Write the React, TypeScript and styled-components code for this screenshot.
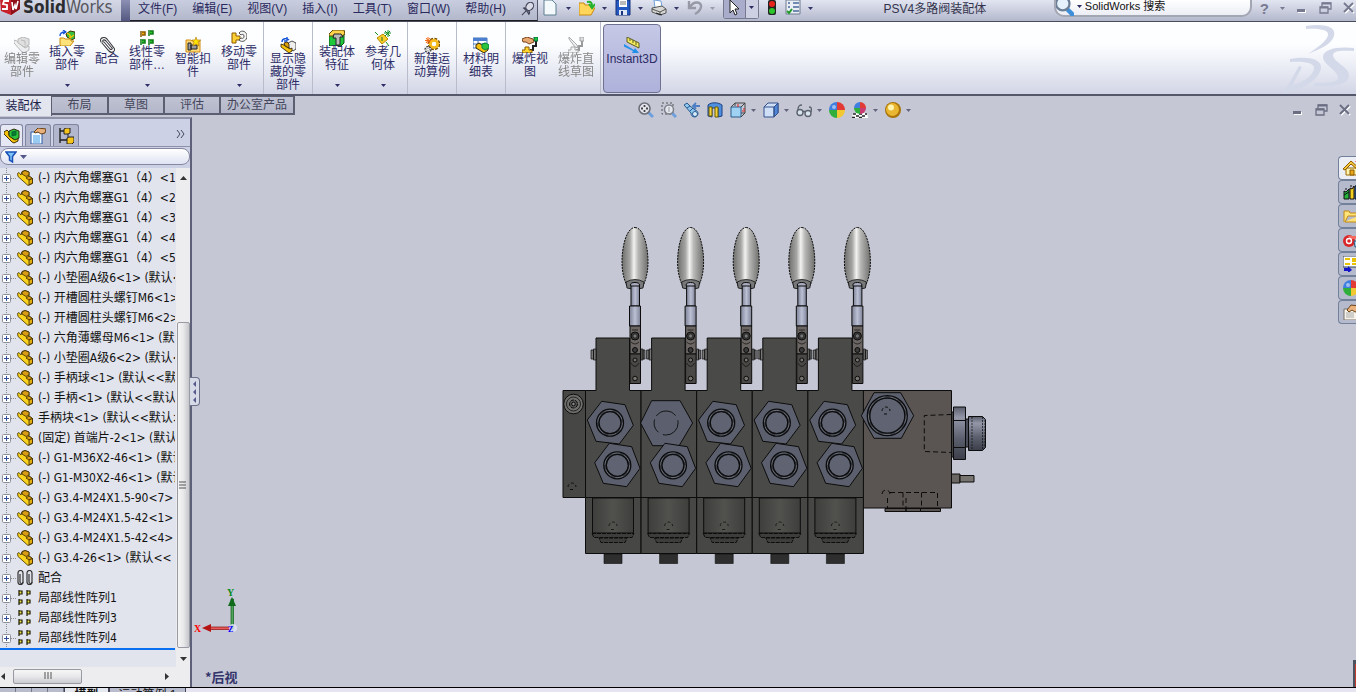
import React from 'react';
import styled, { createGlobalStyle } from 'styled-components';

const GlobalStyle = createGlobalStyle`
  * { box-sizing: border-box; }
  body { margin: 0; overflow: hidden; }
  button, input { font: inherit; color: inherit; margin: 0; }
  button { background: none; border: 0; padding: 0; }
  ul { list-style: none; margin: 0; padding: 0; }
  svg { display: block; flex: none; }
`;

const AppShell = styled.div`
  height: 100vh;
  display: flex;
  flex-direction: column;
  overflow: hidden;
  background: #c5c8d4;
  color: #2a2a5e;
  font: 12px/13px 'Liberation Sans', 'Noto Sans CJK SC', sans-serif;
`;

/* ---------- menu bar ---------- */
const MenuBar = styled.header`
  flex: none;
  display: flex;
  height: 22px;
  background: linear-gradient(#e2e5f1, #b3b8cc);
  border-bottom: 1px solid #4a4c5c;
`;
const Brand = styled.div`
  display: flex;
  align-items: center;
  gap: 3px;
  width: 121px;
  padding-bottom: 6px;
  background: linear-gradient(#d5d8e6, #b9bdcf);
  font-family: 'DejaVu Sans Condensed', 'Liberation Sans', sans-serif;
  font-size: 17px;
  line-height: 13px;
  color: #55565e;
  white-space: nowrap;
  b { color: #2c2c30; }
`;
const BrandEdge = styled.div`
  width: 9px;
  background: linear-gradient(#8d90b4, #54577f);
`;
const Menus = styled.nav`
  display: flex;
  align-items: center;
  gap: 15px;
  padding: 0 2px 2px 8px;
  background: linear-gradient(#c9cde0, #b4b8cb);
  border-right: 1px solid #55586a;
  border-bottom: 1px solid #1c1c22;
  white-space: nowrap;
`;
const QuickBar = styled.div`
  display: flex;
  align-items: center;
  gap: 5px;
  padding: 0 0 5px 5px;
`;
const QuickItem = styled.div<{ $off?: boolean }>`
  display: flex;
  align-items: center;
  gap: 7px;
  width: 31px;
  color: ${p => (p.$off ? '#9a9cac' : '#34366a')};
  button { display: flex; align-items: center; }
`;
const SelectTool = styled.div`
  display: flex;
  align-self: flex-start;
  height: 19px;
  border: 1px solid #77798f;
  border-top: 0;
  border-radius: 0 0 3px 3px;
  button { display: flex; align-items: center; justify-content: center; width: 21px; padding-bottom: 3px; background: #a9acca; }
  button + button { width: 13px; background: #cdd0e2; border-left: 1px solid #77798f; }
`;
const DocTitle = styled.div`
  margin: 0 auto;
  padding-top: 3px;
  color: #33334d;
  white-space: nowrap;
`;
const Search = styled.form`
  display: flex;
  align-items: center;
  align-self: flex-start;
  gap: 3px;
  width: 198px;
  height: 17px;
  padding-bottom: 2px;
  background: linear-gradient(#ffffff, #eceef5);
  border: 2px solid #a3a6b3;
  border-top: 0;
  border-radius: 0 0 10px 10px;
  font-size: 11px;
  input { width: 150px; border: 0; padding: 0; outline: 0; background: none; color: #111; }
  input::placeholder { color: #111; opacity: 1; }
`;
const TopControls = styled.div`
  display: flex;
  align-items: center;
  gap: 11px;
  padding: 0 1px 5px 8px;
  color: #777a90;
  button { display: flex; }
  b { font-size: 15px; }
`;

/* ---------- ribbon ---------- */
const Ribbon = styled.section`
  flex: none;
  display: flex;
  height: 74px;
  background: linear-gradient(#fdfeff 30%, #eceef6 60%, #d2d5e5);
  border-bottom: 2px solid #55576a;
`;
const RibbonGroup = styled.div`
  display: flex;
  padding: 0 1px;
  border-right: 1px solid #b9bccb;
  &:first-child { padding: 0 1px 0 0; }
`;
const RibbonButton = styled.button<{ $w?: number; $menu?: boolean; $off?: boolean; $on?: boolean }>`
  display: flex;
  flex-direction: column;
  align-items: center;
  width: ${p => p.$w ?? 46}px;
  height: ${p => (p.$on ? 69 : 72)}px;
  margin: ${p => (p.$on ? '2px 0 0 2px' : 0)};
  padding: ${p => (p.$menu ? 8 : p.$on ? 12 : 15)}px 0 7px;
  color: ${p => (p.$off ? '#85868c' : '#2c2c66')};
  border: ${p => (p.$on ? '1px solid #6f7190' : '0')};
  border-radius: 4px;
  background: ${p => (p.$on ? 'linear-gradient(#c6c8e6, #aeb1da)' : 'none')};
  filter: ${p => (p.$off ? 'grayscale(1)' : 'none')};
  svg:first-child { opacity: ${p => (p.$off ? 0.45 : 1)}; }
  svg:last-child:not(:first-child) { margin-top: auto; }
`;
const RibbonLabel = styled.span<{ $wide?: boolean }>`
  width: ${p => (p.$wide ? 54 : 38)}px;
  line-height: 13px;
  word-break: break-all;
`;
const Watermark = styled.div`
  margin-left: auto;
`;

/* ---------- body ---------- */
const Main = styled.main`
  flex: 1;
  display: flex;
  min-height: 0;
`;
const Left = styled.aside`
  position: relative;
  z-index: 1;
  flex: none;
  display: flex;
  flex-direction: column;
  width: 192px;
`;
const Tabs = styled.nav`
  display: flex;
  width: max-content;
  height: 20px;
`;
const Tab = styled.button<{ $w: number; $active?: boolean }>`
  width: ${p => p.$w}px;
  height: ${p => (p.$active ? 20 : 19)}px;
  padding-top: 1px;
  padding-right: ${p => (p.$active ? 4 : 0)}px;
  color: ${p => (p.$active ? '#22224a' : '#44465c')};
  background: ${p => (p.$active ? '#e3e5ef' : 'linear-gradient(#bfc2d2, #b4b7c9)')};
  border: solid #5c5e72;
  border-width: ${p => (p.$active ? '0 1px 0 0' : '1px 2px 2px 0')};
`;
const Panel = styled.div`
  flex: 1;
  display: flex;
  flex-direction: column;
  min-height: 0;
  margin-top: 1px;
  background: #cdd1e6;
  border-top: 2px solid #8e91a8;
  border-right: 2px solid #5d6078;
`;
const PanelTabs = styled.div`
  flex: none;
  display: flex;
  align-items: flex-end;
  height: 28px;
  padding-top: 5px;
  gap: 2px;
  border-bottom: 1px solid #8e91a8;
`;
const PanelTab = styled.button<{ $active?: boolean }>`
  display: flex;
  align-items: center;
  justify-content: center;
  width: ${p => (p.$active ? 23 : 26)}px;
  height: 22px;
  border: 1px solid #8084a0;
  border-bottom: 0;
  border-radius: 3px 3px 0 0;
  background: ${p => (p.$active ? '#e6e8f4' : '#b3b7cd')};
`;
const Expand = styled.button`
  display: flex;
  align-self: flex-start;
  margin: 6px 5px 0 auto;
`;
const Filter = styled.div`
  flex: none;
  display: flex;
  align-items: center;
  gap: 3px;
  height: 17px;
  margin: 1px 0 3px;
  padding-left: 4px;
  border: 1px solid #8588a0;
  border-radius: 8px;
  background: linear-gradient(#ffffff, #dfe3f2);
  color: #55578a;
  button { display: flex; }
`;
const TreeArea = styled.div`
  flex: 1;
  display: flex;
  min-height: 0;
  background: #e1e4ec;
`;
const Tree = styled.ul`
  flex: 1;
  min-width: 0;
  margin-right: 1px;
  overflow: hidden;
  color: #111;
  font-family: 'DejaVu Sans Condensed', 'Noto Sans CJK SC', sans-serif;
`;
const TreeRow = styled.li`
  display: flex;
  align-items: center;
  height: 20px;
  padding-left: 2px;
  white-space: pre;
  background: repeating-linear-gradient(#8c8e98 0 1px, transparent 1px 2px) 6px 0 / 1px 100% no-repeat;
`;
const Dots = styled.span`
  flex: none;
  width: 5px;
  margin-right: 1px;
  border-top: 1px dotted #8c8e98;
`;
const Plus = styled.button`
  flex: none;
  display: flex;
`;
const NodeName = styled.span`
  margin-left: 5px;
  line-height: 20px;
`;
const RollbackBar = styled.li`
  height: 2px;
  background: #0a6ff0;
`;
const VScroll = styled.div`
  flex: none;
  display: flex;
  flex-direction: column;
  align-items: center;
  justify-content: space-between;
  width: 14px;
  padding: 7px 0 5px;
  background: #ededf0;
`;
const VThumb = styled.div`
  display: flex;
  align-items: center;
  justify-content: center;
  width: 13px;
  height: 326px;
  margin: auto 0 7px;
  border: 1px solid #979aa2;
  border-radius: 2px;
  background: linear-gradient(90deg, #f6f6f7, #e8e8ea 50%, #c6c7cc);
`;
const HScroll = styled.div`
  flex: none;
  display: flex;
  align-items: center;
  height: 20px;
  padding: 0 20px 2px 0;
  background: #ededf0;
`;
const HThumb = styled.div`
  display: flex;
  align-items: center;
  justify-content: center;
  width: 69px;
  height: 15px;
  margin: 0 auto 0 6px;
  border: 1px solid #979aa2;
  border-radius: 2px;
  background: linear-gradient(#f6f6f7, #e8e8ea 50%, #cbccd1);
`;
const Splitter = styled.button`
  position: absolute;
  left: 190px;
  top: 281px;
  width: 10px;
  height: 29px;
  display: flex;
  align-items: center;
  justify-content: center;
  background: #d6d9e6;
  border: 1px solid #6c6f88;
  border-left: 0;
  border-radius: 0 4px 4px 0;
`;

/* ---------- graphics area ---------- */
const Viewport = styled.section`
  position: relative;
  flex: 1;
  display: flex;
  flex-direction: column;
  min-width: 0;
  background: #c5c8d4;
`;
const ViewHead = styled.div`
  display: grid;
  grid-template-columns: 1fr auto 1fr;
  align-items: center;
  height: 28px;
`;
const ViewTools = styled.div`
  grid-column: 2;
  display: flex;
  align-items: center;
  gap: 7px;
  color: #62647e;
  button { display: flex; align-items: center; gap: 5px; }
`;
const WindowControls = styled.div`
  display: flex;
  justify-content: flex-end;
  gap: 11px;
  padding-right: 5px;
  color: #6b6d83;
  button { display: flex; }
`;
const Stage = styled.div`
  flex: 1;
  display: flex;
  justify-content: center;
  align-items: center;
  min-height: 0;
  padding-top: 12px;
  margin-bottom: -67px;
`;
const ViewFoot = styled.div`
  display: flex;
  flex-direction: column;
  align-items: flex-start;
  gap: 35px;
  width: 60px;
  padding: 0 0 4px 2px;
  font-family: 'Noto Sans CJK SC', sans-serif;
  font-size: 13px;
  font-weight: bold;
  color: #34346c;
  span { padding-left: 11px; }
`;
const TaskTabs = styled.nav`
  position: absolute;
  right: 0;
  top: 60px;
  display: flex;
  flex-direction: column;
`;
const TaskTab = styled.button<{ $active?: boolean }>`
  display: flex;
  align-items: center;
  width: 18px;
  height: 24px;
  padding-left: 4px;
  overflow: hidden;
  border: 1px solid #72809a;
  border-right: 0;
  border-radius: 4px 0 0 4px;
  background: ${p => (p.$active ? '#eceef6' : '#b6bacd')};
`;
const EdgeHandle = styled.div`
  position: absolute;
  right: 0;
  bottom: 0;
  width: 3px;
  height: 27px;
  background: #c43a2c;
  border: solid #4b5260;
  border-width: 4px 0 0 2px;
`;
const BottomBar = styled.footer`
  flex: none;
  display: flex;
  height: 5px;
  overflow: hidden;
  background: #e6e4f0;
  border-top: 1px solid #000;
  color: #111;
`;
const BottomNav = styled.button`
  width: 16px;
  background: #b9bccd;
  border-right: 1px solid #77798f;
`;
const BottomTab = styled.button<{ $w: number; $active?: boolean }>`
  width: ${p => p.$w}px;
  height: 14px;
  font-weight: ${p => (p.$active ? 'bold' : 'normal')};
  background: ${p => (p.$active ? '#e6e8f0' : '#b9bccd')};
  border-left: 1px solid #44465a;
  border-right: 1px solid #44465a;
  white-space: nowrap;
`;

/* ---------- icons ---------- */
const Caret = () => (
  <svg width="5" height="3" viewBox="0 0 5 3"><path d="M0 0h5L2.5 3z" fill="currentColor" /></svg>
);
const Arrow = ({ d }: { d: string }) => (
  <svg width="7" height="7" viewBox="0 0 7 7"><path d={d} fill="#333" /></svg>
);

const art: Record<string, React.ReactNode> = {
  part: (
    <g stroke="#3a2800" strokeWidth=".8" strokeLinejoin="round">
      <path d="M.5 3.500L2 2.500l2 2.500 1-3.500L8 .5l4 1.500v4l3.500 2.500v5L11 15.500 1 6.500z" fill="#f8d21c" />
      <path d="M5 2l3-1.500L12 2v3L9 6.500 5 4z" fill="#d79c14" />
      <path d="M9 8l3-2 3.500 2.500L12 10z" fill="#d79c14" />
      <path d="M12 10v5l3.500-2v-4.500z" fill="#e3ad14" />
    </g>
  ),
  asm: (
    <g stroke="#2a1c00" strokeWidth=".9" strokeLinejoin="round">
      <path d="M0 4l3-2 2 2v3l4 4 5-1v3l-4 2-2-1-8-8z" fill="#f5c20c" />
      <path d="M5 3l5-2 5 2v7l-4 2-6-4z" fill="#2ec43c" />
      <path d="M8 4l4-1v4l-4 1z" fill="#0b7d2b" stroke="#063" />
    </g>
  ),
  edit: (
    <g stroke="#666" strokeLinejoin="round">
      <path d="M0 3l3 1 8 7 4-2v4l-5 3-2-1-8-9z" fill="#ddd" />
      <path d="M4 2l5-2 6 2v6l-5 2-6-4z" fill="#bbb" /><path d="M7 3l4 1v4" fill="none" />
    </g>
  ),
  insert: (
    <g strokeLinejoin="round">
      <path d="M1 6C1 3 3 2 6 2M4 0l3 2-3 2" fill="none" stroke="#1554d8" strokeWidth="1.4" />
      <path d="M7 4l4-3 5 1v6l-3 2-5-3z" fill="#38c040" stroke="#3c3000" />
      <path d="M8 3l3 2v3l4-3" fill="none" stroke="#f2c000" strokeWidth="1.5" />
      <path d="M1 15V8h4l1 1h6v2h3l-4 5H2z" fill="#ffe27a" stroke="#c58a10" />
    </g>
  ),
  clip: (
    <g fill="none" stroke="#3b3b40" strokeWidth="1.1" strokeLinecap="round">
      <path d="M3 6l7 8c3 3 7 0 5-3L8 2C5-1 0 1 2 5M5 5l6 7c1 1 3 0 2-1L7 4C5 2 3 3 4 5" />
    </g>
  ),
  pattern: (
    <g strokeWidth="1">
      <path d="M2 1v6M3 2h3v3H3" fill="#f2b000" stroke="#8a5a00" strokeWidth="1.5" />
      {[[9, 0], [1, 9], [9, 9]].map(([x, y]) => (
        <path key={`${x}${y}`} transform={`translate(${x} ${y})`} d="M1 0v6M2 1h3v3H2" fill="#2bc22e" stroke="#0c7a16" strokeWidth="1.5" />
      ))}
    </g>
  ),
  smart: (
    <g>
      <path d="M1 3h5l1 1h8v11H1z" fill="#ffd978" stroke="#d08a10" />
      <path d="M3 6h3v7H3zM6 8h6v4H6z" fill="#9a9ca0" stroke="#222" />
      <path d="M11 0l1 3 4 0-3 2 1 4-3-2-3 2 1-4-2-2h3z" fill="#ffe300" stroke="#b07400" strokeWidth=".6" />
    </g>
  ),
  move: (
    <g>
      <path d="M1 3h4v3h4v4H5v3H1z" fill="#ffd034" stroke="#8a5a00" />
      <path d="M8 3c3-4 8-1 8 3 0 5-5 7-8 4l2-2c2 1 3 0 3-2s-2-2-3-1z" fill="#f4f4f4" stroke="#555" />
    </g>
  ),
  showhide: (
    <g strokeLinejoin="round" strokeWidth=".8">
      <path d="M2 5c0-4 5-4 7-2M7 0v4H4" fill="none" stroke="#1554d8" strokeWidth="1.4" />
      <path d="M8 6l4-2 4 2v6l-3 2-5-4z" fill="#eee" stroke="#222" />
      <path d="M1 7l3 1 6 4 2-1v3l-3 2-8-6z" fill="#f5c20c" stroke="#2a1c00" />
      <path d="M4 6l3-1 2 2v4L5 9z" fill="#d99d10" stroke="#2a1c00" />
    </g>
  ),
  feature: (
    <g>
      <path d="M0 4l4-3h11v12l-3 3H0z" fill="#1fc93a" stroke="#0a4d12" />
      <path d="M0 4l4-4h11l1 4-3 2H0z" fill="#ffd34a" stroke="#5a4200" />
      <path d="M5 4h7l2 3h-3v8H7V8H4z" fill="#bbb" stroke="#222" />
    </g>
  ),
  refgeo: (
    <g>
      <path d="M2 8l6-4 5 5-6 5z" fill="#f7cf2c" stroke="#b98a00" />
      <path d="M0 2l3 3M11 12l3 4M13 0v7M9 3h7M10 1l5 5M15 1l-5 5" stroke="#129322" fill="none" />
      <path d="M7 7v4" stroke="#1a6a20" />
    </g>
  ),
  motion: (
    <g fill="none">
      <circle cx="10" cy="7" r="4.5" stroke="#7a5200" strokeWidth="3.6" strokeDasharray="2.4 1.1" />
      <circle cx="10" cy="7" r="3.7" stroke="#f7bb1c" strokeWidth="2.8" />
      <circle cx="4" cy="12.500" r="2.400" stroke="#333" strokeWidth="2.400" strokeDasharray="1.4 .8" />
      <circle cx="4" cy="12.500" r="2" stroke="#ddd" strokeWidth="1" />
      <path d="M4 0v7M1 3.500h6M2 1l4 5M6 1L2 6" stroke="#f36a12" />
    </g>
  ),
  bom: (
    <g>
      <path d="M0 1h14v10H0z" fill="#fff" stroke="#4775b8" /><path d="M0 1h14v3H0z" fill="#4a7fd0" />
      <path d="M0 7h14M5 4v7" stroke="#4775b8" />
      <path d="M3 8l3-2 3 2 2-2 4 2v5l-4 3-8-5z" fill="#f5c20c" stroke="#3a2a00" /><path d="M9 7l4-1 3 2v3l-4 2-3-2z" fill="#2ec43c" stroke="#084" />
    </g>
  ),
  explode: (
    <g>
      <path d="M14 3v6h-3v4H8" fill="none" stroke="#222" strokeWidth="2" />
      <path d="M12 0h4v4h-4z" fill="#1fc43a" stroke="#064" />
      <path d="M0 2l5-2 6 2 1 3-5 2-3-2-3 0z" fill="#e7a871" stroke="#7a4418" />
      <path d="M3 10h4v3h3v3H0v-3h3z" fill="#ffd52e" stroke="#8a5a00" />
    </g>
  ),
  sketch: (
    <g>
      <path d="M14 3v6h-3v4H8" fill="none" stroke="#222" strokeWidth="2" /><path d="M12 0h4v4h-4z" fill="#bbb" stroke="#333" />
      <path d="M1 0l8 8 1 3-3-1-6-8z" fill="#ddd" stroke="#444" /><path d="M3 10h4v3h3v3H0v-3h3z" fill="#eee" stroke="#444" />
    </g>
  ),
  instant: (
    <g>
      <path d="M3 0l12 6v5L3 5z" fill="#f4ec5c" stroke="#5b5a20" /><path d="M6 2v2M9 3v3M12 5v3" stroke="#5b5a20" />
      <path d="M0 7l10 6 1-2 4 5-7 0 1-2-10-5z" fill="#1f8fe8" />
    </g>
  ),
  mates: (
    <g fill="none" stroke="#333" strokeWidth="1.2">
      <path d="M1 12V3a2.500 2.500 0 015 0v9a1.500 1.500 0 01-3 0V4" /><path d="M10 12V3a2.500 2.500 0 015 0v9a1.500 1.500 0 01-3 0V4" />
      <path d="M1 12a2 2 0 005 0M10 12a2 2 0 005 0" />
    </g>
  ),
  localpat: (
    <g fill="#f2e24a" stroke="#1c1c00" strokeWidth="1.2">
      {[[1, 0], [9, 0], [1, 9], [9, 9]].map(([x, y]) => (
        <path key={`${x}${y}`} transform={`translate(${x} ${y})`} d="M1 0v6M1 1h3v3H1" />
      ))}
    </g>
  ),
  props: (
    <g>
      <path d="M1 4h11v12H1z" fill="#f2f8ff" stroke="#2a5fa8" /><path d="M3 8h7M3 10h7M3 12h7M3 14h7" stroke="#3fa0e8" />
      <path d="M4 4l4-4 8 1-1 4-4 1-3-2-3 1z" fill="#e9b27c" stroke="#6a4218" />
    </g>
  ),
  config: (
    <g>
      <path d="M2 0v15M2 3h5M2 12h7" stroke="#222" fill="none" strokeWidth="1.4" />
      <path d="M6 1l2-1h4v5l-2 1H6zM9 10l2-1h5v5l-2 2H9z" fill="#f7c51a" stroke="#222" />
      <path d="M10 6v3" stroke="#222" />
    </g>
  ),
  new: <path d="M1 0h8l4 4v11H1z" fill="#f4f9fc" stroke="#5d7f90" />,
  open: (
    <g>
      <path d="M0 15V3h5l1 2h6v3h4l-4 7H1z" fill="#ffd65a" stroke="#c88a10" />
      <path d="M8 2c4-1 5 1 5 4M10 4l3 4 3-4" fill="none" stroke="#21b32a" strokeWidth="2" />
    </g>
  ),
  save: (
    <g>
      <path d="M1 0h14v15H1z" fill="#2459c0" stroke="#16337c" /><path d="M4 0h8v7H4z" fill="#fff" />
      <path d="M5 2h6M5 4h6" stroke="#777" /><path d="M4 10h8v5H4z" fill="#dde6f4" /><path d="M6 11h2v4H6z" fill="#16337c" />
    </g>
  ),
  print: (
    <g stroke="#555">
      <path d="M3 0l7 1 1 6-7 1z" fill="#fff" stroke="#6f9fd8" /><path d="M1 8l10-2 4 3v4l-6 2-8-3z" fill="#d6d6d4" />
      <path d="M1 9l8 3 6-3M9 12v3" fill="none" /><path d="M5 13l6 2" stroke="#222" />
    </g>
  ),
  undo: <path d="M2 1v7h7M3 7c4-7 12-5 11 0-1 4-4 6-6 7" fill="none" stroke="#9799a6" strokeWidth="2.4" />,
  cursor: <path d="M4 0l9 9H9l2 5-2 1-2-5-3 3z" fill="#fff" stroke="#222" />,
  traffic: (
    <g>
      <rect x="4" y="0" width="8" height="15" rx="2" fill="#222" /><circle cx="8" cy="4" r="3" fill="#e8231c" /><circle cx="8" cy="11" r="3" fill="#2cc52c" />
    </g>
  ),
  options: (
    <g>
      <path d="M1 0h14v14H1z" fill="#e9eef4" stroke="#6e7b90" />
      <path d="M3 3h2M3 7h2M8 3h6M8 7h6M8 11h6" stroke="#4e6b9a" strokeWidth="1.5" /><path d="M2 11l2 2 3-4" fill="none" stroke="#1f9a28" strokeWidth="2" />
    </g>
  ),
  pin: (
    <g stroke="#44465a" strokeWidth="1.3">
      <path d="M1 15l6-6" /><path d="M3 7c2-1 3 0 5 2s2 4 1 5c-1-3-4-5-6-7z" fill="#8d90a4" /><ellipse cx="10" cy="5" rx="4" ry="5" transform="rotate(35 10 5)" fill="#d9dbe6" />
    </g>
  ),
  lens: (
    <g>
      <path d="M10 10l6 6" stroke="#3c8fd8" strokeWidth="4" /><circle cx="6" cy="5" r="6" fill="#e6f2fb" stroke="#6c7f96" strokeWidth="2" />
    </g>
  ),
  zoomfit: (
    <g>
      <path d="M10 10l5 5" stroke="#6e9fdc" strokeWidth="3" /><circle cx="6.500" cy="6.500" r="5.500" fill="#e3e6ee" stroke="#6d7079" strokeWidth="1.6" />
      <path d="M6.500 3v7M3 6.500h7" stroke="#444" strokeWidth="1.8" strokeDasharray="2 3" />
    </g>
  ),
  zoomarea: (
    <g>
      <path d="M1 1h11v11H1z" fill="none" stroke="#555" strokeDasharray="2 2" /><path d="M11 11l4 4" stroke="#6e9fdc" strokeWidth="3" />
      <circle cx="8" cy="7.500" r="4.500" fill="#e3e6ee" stroke="#7d8089" strokeWidth="1.5" /><path d="M8 5v5" stroke="#999" />
    </g>
  ),
  prev: (
    <g>
      <path d="M0 3l3-2 3 3 5 4c4 1 4 6 0 7-3 0-4-2-4-4z" fill="#8fc6ee" stroke="#29598f" /><path d="M3 6l3-2M6 9l3-3" stroke="#29598f" /><circle cx="11" cy="12" r="2.500" fill="#d9eefb" stroke="#29598f" />
      <path d="M16 4h-6M12 1L9 4l3 3" fill="none" stroke="#4b7ec4" strokeWidth="1.8" />
    </g>
  ),
  section: (
    <g>
      <path d="M1 3c3-3 10-3 14 0v11l-4 1V6H5v9l-4-1z" fill="#4e8fe0" stroke="#1d3f80" />
      <path d="M2 5h3v9H2zM8 5h3v10H8z" fill="#f3d23a" stroke="#6b5a00" />
    </g>
  ),
  orient: (
    <g>
      <path d="M5 1h10v10M5 1v3M15 11h-4" fill="none" stroke="#444" /><path d="M1 5h10v10H1z" fill="#9fd2f2" stroke="#2b5d8c" />
      <path d="M1 5l4-4M11 5l4-4M11 15l4-4" stroke="#444" /><path d="M8 2v3M13 7h2M12 9h3" stroke="#d22" />
    </g>
  ),
  display: (
    <g stroke="#33508c">
      <path d="M1 5l4-4h10v10l-4 4H1z" fill="#cfe0f6" /><path d="M11 5l4-4v10l-4 4z" fill="#4f86d6" /><path d="M1 5h10v10" fill="none" />
    </g>
  ),
  glasses: (
    <g fill="#d8e4ee" stroke="#5d6370" strokeWidth="1.400">
      <circle cx="4" cy="10.500" r="3" /><circle cx="12" cy="11.500" r="3" /><path d="M7 10c1-1 1-1 2 0M2 8C2 4 3 3 6 3M15 10c1-4 0-5-2-5" fill="none" />
    </g>
  ),
  ball: (
    <g>
      <path d="M8 8V0a8 8 0 00-8 8z" fill="#3f7fe0" /><path d="M8 8V0a8 8 0 018 8z" fill="#e23a34" />
      <path d="M8 8H0a8 8 0 008 8z" fill="#2fae3c" /><path d="M8 8h8a8 8 0 01-8 8z" fill="#f2c832" /><circle cx="5" cy="5" r="2" fill="#fff" opacity=".5" />
    </g>
  ),
  scene: (
    <g>
      <path d="M1 11h14l1 5H0z" fill="#fff" /><path d="M1 12h3M7 12h3M13 12h2M4 14h3M10 14h3M0 15.500h3M7 15.500h3" stroke="#222" strokeWidth="1.6" />
      <path d="M8 6V0a6 6 0 00-6 6z" fill="#3f7fe0" /><path d="M8 6V0a6 6 0 016 6z" fill="#e23a34" />
      <path d="M8 6H2a6 6 0 006 6z" fill="#2fae3c" /><path d="M8 6h6a6 6 0 01-6 6z" fill="#c83a70" />
    </g>
  ),
  gold: (
    <g><circle cx="8" cy="8" r="8" fill="#a87208" /><circle cx="7.500" cy="7.500" r="6.500" fill="#e8b630" /><circle cx="6" cy="5.500" r="3" fill="#fff3b0" /></g>
  ),
  home: (
    <g>
      <path d="M3 8h12v7H3z" fill="#fff3b0" stroke="#9a6a00" /><path d="M0 9l8-8 9 8-2 1-7-6-6 6z" fill="#f7c93c" stroke="#8a5a00" />
      <path d="M7 10h4v5H7z" fill="#e8a71c" stroke="#8a5a00" /><path d="M12 1h3v4z" fill="#d22" />
    </g>
  ),
  library: (
    <g stroke="#111">
      <path d="M1 7l2 1 3-3v10H1z" fill="#24b43a" /><path d="M7 4l2 1 2-3v13H7z" fill="#f2cf1e" /><path d="M12 2l4-1v14h-4z" fill="#2d6fd8" /><path d="M1 11l5-3M8 3V1M3 6V4" fill="none" />
    </g>
  ),
  folder: <path d="M1 14V3h5l1 2h8v3H5l-3 6h12l4-7" fill="#ffe27a" stroke="#c08a10" />,
  viewp: (
    <g>
      <circle cx="6" cy="9" r="6" fill="#d8262a" /><path d="M5 4h9l2 3H7z" fill="#f26a60" /><circle cx="6" cy="9" r="2.500" fill="none" stroke="#fff" strokeWidth="1.4" /><path d="M11 9h6v6h-5z" fill="#9fd2f2" stroke="#357" />
    </g>
  ),
  search: (
    <g>
      <path d="M0 0h17v11H0z" fill="#fff" stroke="#345" /><path d="M2 3h5M9 3h5M2 8h5M9 8h5M9 5h5" stroke="#e8c400" strokeWidth="2" /><path d="M1 12h4v-2l4 4-4 3v-2H1z" fill="#1414c8" />
    </g>
  ),
  palette: (
    <g>
      <path d="M1 5h14v11H1z" fill="#f6f3ea" stroke="#77706a" /><path d="M3 9h8M3 11h8M3 13h8" stroke="#aaa" />
      <path d="M4 6l4-5 8 1v5l-4 1-3-2-3 2z" fill="#e9b27c" stroke="#6a4218" />
    </g>
  ),
};
const Icon = ({ name, size = 16 }: { name: string; size?: number }) => (
  <svg width={size} height={size} viewBox="0 0 16 16" aria-hidden="true">{art[name]}</svg>
);

const MinIcon = () => (
  <svg width="12" height="12" viewBox="0 0 12 12"><path d="M2 8h8v3H2z" fill="#fff" /><path d="M1 7h8v3H1z" fill="currentColor" /></svg>
);
const RestoreIcon = () => (
  <svg width="13" height="12" viewBox="0 0 13 12"><path d="M3 4V1h9v6H9M1 5h8v6H1z" fill="none" stroke="currentColor" strokeWidth="1.3" /><path d="M3 1.500h9M1 5.500h8" stroke="currentColor" strokeWidth="2" /></svg>
);
const CloseIcon = () => (
  <svg width="12" height="12" viewBox="0 0 12 12"><path d="M2 2l9 9M11 2l-9 9" stroke="#fff" strokeWidth="2" /><path d="M1 1l9 9M10 1l-9 9" stroke="currentColor" strokeWidth="2" /></svg>
);
const Logo = () => (
  <svg width="20" height="17" viewBox="0 0 20 17">
    <path d="M0 0h20v10l-9 6-10-4z" fill="#c8202a" /><path d="M11 0h9v10l-9 6z" fill="#8e0f18" />
    <path d="M9 2H4l-1 3 4 1v4H2" fill="none" stroke="#fff" strokeWidth="1.8" /><path d="M12 3l1 8 2-5 1 4 2-8" fill="none" stroke="#fff" strokeWidth="1.6" />
  </svg>
);
const Grip = ({ vertical }: { vertical?: boolean }) => (
  <svg width="8" height="8" viewBox="0 0 8 8"><path d={vertical ? 'M0 1h7M0 4h7M0 7h7' : 'M1 0v7M4 0v7M7 0v7'} stroke="#555" /></svg>
);

/* ---------- valve assembly ---------- */
const line = { stroke: '#0c0c0c', strokeWidth: 1 };

const Lever = () => (
  <g {...line}>
    <path d="M635 227.500C643 227.500 648 245 648 262C648 274 645 282 642.500 287H627.500C625 282 622 274 622 262C622 245 627 227.500 635 227.500Z" fill="url(#grip)" strokeDasharray="2 1" />
    <path d="M626 282q9-5 18 0l-1 6q-8 3-16 0z" fill="#77787a" strokeWidth=".8" />
    <ellipse cx="635" cy="285" rx="4.500" ry="2.500" fill="#a9acbe" />
    <path d="M631 286h8.500v20H631z" fill="url(#rod)" /><path d="M629.500 306h11v20h-11z" fill="url(#rod)" />
    <path d="M630 326h10.500v28H630z" fill="#6b6663" /><path d="M630 354h10.500v29.500H630z" fill="#4a4846" />
    <circle cx="635" cy="336" r="4" fill="#3b3a3a" /><circle cx="635" cy="336" r="2" fill="#777" strokeWidth=".5" /><circle cx="635" cy="350" r="2.500" fill="#3b3a3a" />
    <circle cx="635" cy="360" r="2" fill="#77736f" /><circle cx="635" cy="378.500" r="2.300" fill="#77736f" />
    <path d="M631 363q4 7 8 0M632 330h6M631 342q4 4 8 0" fill="none" strokeWidth=".7" />
    <path d="M641 349h2v11h-2zM643 350h2v9h-2z" fill="#777" strokeWidth=".7" />
    <path d="M593.500 349h2.500v11h-2.500zM591 350h2.500v9H591z" fill="#777" strokeWidth=".7" />
  </g>
);
const Bolt = ({ cx, cy, r = 13.5, wall = 2.5 }: { cx: number; cy: number; r?: number; wall?: number }) => (
  <g {...line}>
    <circle cx={cx} cy={cy} r={r} fill="#3f434e" strokeWidth="1.3" /><circle cx={cx} cy={cy} r={r - 1.2} fill="none" stroke="#8a8f9e" strokeWidth=".6" strokeDasharray="8 5" />
    <circle cx={cx} cy={cy} r={r - wall} fill="#5f6372" strokeWidth="1.3" />
  </g>
);
const Section = ({ index }: { index: number }) => (
  <g transform={`translate(${index * 55.6} 0)`} {...line}>
    <path d="M585.500 390.500H596V338H629.500V390.500H641V497.500H585.500Z" fill="#4a4a48" />
    <path d="M585.500 497.500H641V553.500H585.500Z" fill="#474745" />
    <path d="M592.500 498h41v35h-41z" fill="url(#coil)" />
    <path d="M592 533.500h42l-2 4h-38zM599 538h28l-2 4.500h-24z" fill="#3d3d3b" strokeDasharray="4 1" />
    <path d="M609 526a4 4 0 018 0M611 529.500h4" fill="none" strokeWidth=".8" strokeDasharray="3 2" />
    <path d="M604 554h18v9.500h-18z" fill="#2e2e2e" strokeWidth=".6" />
    {index === 1 ? (
      <g>
        <path d="M596 400.700h28.500l12.500 22.300-13.500 22.700H597l-12-22.700z" fill="#5c606e" />
        <circle cx="610.500" cy="423" r="12" fill="none" strokeWidth=".9" strokeDasharray="22 5 14 4" />
      </g>
    ) : (
      <g>
        <path d="M601.700 401.300L625 404.700 633.300 425.300 619.300 444 596 441.300 587.300 420Z" fill="#5c606e" />
        <Bolt cx={610} cy={422.7} />
      </g>
    )}
    <path d="M609.300 443.300L631.700 446.700 640 468.300 626.700 486.700 603.300 483.300 594.700 462.700Z" fill="#5c606e" />
    <Bolt cx={617.3} cy={465.3} />
    <Lever />
  </g>
);
const Assembly = () => (
  <svg width="430" height="345" viewBox="559 223 430 345" role="img" aria-label="PSV4多路阀装配体">
    <defs>
      <linearGradient id="grip"><stop offset="0" stopColor="#6e6e6c" /><stop offset=".3" stopColor="#a5a5a3" /><stop offset=".46" stopColor="#f2f2f0" /><stop offset=".62" stopColor="#b8b8b6" /><stop offset="1" stopColor="#6e6e6c" /></linearGradient>
      <linearGradient id="rod"><stop offset="0" stopColor="#7e8296" /><stop offset=".5" stopColor="#bcc0d4" /><stop offset="1" stopColor="#7e8296" /></linearGradient>
      <linearGradient id="coil"><stop offset="0" stopColor="#3e3e3c" /><stop offset=".5" stopColor="#51514e" /><stop offset="1" stopColor="#3e3e3c" /></linearGradient>
      <linearGradient id="cap" x1="0" y1="0" x2="0" y2="1"><stop offset="0" stopColor="#5a5e6c" /><stop offset=".2" stopColor="#9397a8" /><stop offset=".6" stopColor="#5c606e" /><stop offset="1" stopColor="#3c3f4a" /></linearGradient>
    </defs>
    <g {...line}>
      <path d="M563 390.500h22.500v107H563z" fill="#474846" />
      <circle cx="573.500" cy="404" r="9.800" fill="#6e6f6c" /><circle cx="573.500" cy="404" r="7" fill="none" stroke="#222" /><circle cx="573.500" cy="404" r="4" fill="#555" strokeDasharray="4 1" /><circle cx="573.500" cy="404" r="1.800" fill="#888" />
      <path d="M568 487a4 4 0 018 0M570 489.500h5" fill="none" strokeDasharray="3 2" />
      <path d="M863 390.500h88.500V508H863z" fill="#5a5552" />
    </g>
    {[0, 1, 2, 3, 4].map(i => <Section key={i} index={i} />)}
    <g {...line}>
      <path d="M874 392.700h26.700l13 23-12.400 22.600H874l-12.700-22.600z" fill="#5c606e" />
      <Bolt cx={887.3} cy={415.7} r={20} />
      <path d="M882 411a4 4 0 018 0M884 414h4" fill="none" strokeDasharray="3 2" />
      <path d="M951.500 414.500L924.300 415.500V451.500L951.500 452.500" fill="none" strokeDasharray="5 3" />
      <path d="M951.500 412h2v45h-2z" fill="#444" /><path d="M953.500 407h12v52.500h-12z" fill="url(#cap)" />
      <path d="M953.500 420.500h12M953.500 447.500h12" />
      <path d="M965.500 419h3v28h-3z" fill="#4b4e5a" /><path d="M968.500 416.500h14l3 3v28l-3 3h-14z" fill="url(#cap)" />
      <path d="M972 417v33M982.500 417v33M985 420v27" strokeWidth=".7" strokeDasharray="2 1" />
      <path d="M951.500 474h8.500v9h-8.500z" fill="#6a6663" /><path d="M960 475.500h14v6.500h-14z" fill="#77736f" />
      <path d="M885 508.500h21v3h-21zM906 508.500h14.500v3H906zM920.500 508.500h20v3h-20z" fill="#5a5552" />
      <path d="M882 494a4 4 0 018 0M887.500 498v10M890 492.500h47.500V508M903 492.500V508M906 498v10M921.500 492.500V508" fill="none" strokeDasharray="5 3" />
    </g>
  </svg>
);

const Triad = () => (
  <svg width="44" height="48" viewBox="194 588 44 48" role="img" aria-label="XYZ">
    <path d="M231 600h2.500v30H231z" fill="#4fa35a" stroke="#0c5a18" strokeWidth=".7" /><path d="M232 598l4 9h-8z" fill="#0f6a1c" />
    <path d="M208 628h24v2.500h-24z" fill="#e85a5a" stroke="#8a0c0c" strokeWidth=".7" /><path d="M202 629l9-4v8z" fill="#b41414" />
    <circle cx="233" cy="629" r="4" fill="#e4e4fa" opacity=".8" />
    <g fontFamily="Liberation Serif, serif" fontSize="10" fontWeight="bold">
      <text x="194" y="633" fill="#f00">X</text><text x="227" y="597" fill="#0a8a1a">Y</text><text x="228" y="633" fontSize="8" fill="#00f">Z</text>
    </g>
  </svg>
);

/* ---------- data ---------- */
type Cmd = { label: string; icon: string; w?: number; menu?: boolean; off?: boolean };
const groups: Cmd[][] = [
  [
    { label: '编辑零部件', icon: 'edit', w: 44, off: true },
    { label: '插入零部件', icon: 'insert', menu: true },
    { label: '配合', icon: 'clip', w: 34 },
    { label: '线性零部件…', icon: 'pattern', menu: true },
    { label: '智能扣件', icon: 'smart' },
    { label: '移动零部件', icon: 'move', menu: true },
  ],
  [{ label: '显示隐藏的零部件', icon: 'showhide' }],
  [{ label: '装配体特征', icon: 'feature', menu: true }, { label: '参考几何体', icon: 'refgeo', menu: true }],
  [{ label: '新建运动算例', icon: 'motion' }],
  [{ label: '材料明细表', icon: 'bom' }],
  [{ label: '爆炸视图', icon: 'explode' }, { label: '爆炸直线草图', icon: 'sketch', off: true }],
];
const nodes: [string, string][] = [
  ...[1, 2, 3, 4, 5].map((n): [string, string] => [`(-) 内六角螺塞G1（4）<${n}>`, 'part']),
  ['(-) 小垫圈A级6<1> (默认<<', 'part'],
  ['(-) 开槽圆柱头螺钉M6<1>', 'part'],
  ['(-) 开槽圆柱头螺钉M6<2>', 'part'],
  ['(-) 六角薄螺母M6<1> (默认', 'part'],
  ['(-) 小垫圈A级6<2> (默认<<', 'part'],
  ['(-) 手柄球<1> (默认<<默认>', 'part'],
  ['(-) 手柄<1> (默认<<默认>', 'part'],
  ['手柄块<1> (默认<<默认>', 'part'],
  ['(固定) 首端片-2<1> (默认<<', 'part'],
  ['(-) G1-M36X2-46<1> (默认', 'part'],
  ['(-) G1-M30X2-46<1> (默认', 'part'],
  ['(-) G3.4-M24X1.5-90<7>', 'part'],
  ['(-) G3.4-M24X1.5-42<1>', 'part'],
  ['(-) G3.4-M24X1.5-42<4>', 'part'],
  ['(-) G3.4-26<1> (默认<<', 'part'],
  ['配合', 'mates'],
  ['局部线性阵列1', 'localpat'],
  ['局部线性阵列3', 'localpat'],
  ['局部线性阵列4', 'localpat'],
];
const quick = ['new', 'open', 'save', 'print', 'undo'];
const viewTools: [string, boolean][] = [
  ['zoomfit', false], ['zoomarea', false], ['prev', false], ['section', false], ['orient', true],
  ['display', true], ['glasses', true], ['ball', false], ['scene', true], ['gold', true],
];

export default function App() {
  return (
    <AppShell>
      <GlobalStyle />
      <MenuBar>
        <Brand><Logo /><span><b>Solid</b>Works</span></Brand>
        <BrandEdge />
        <Menus>
          {['文件(F)', '编辑(E)', '视图(V)', '插入(I)', '工具(T)', '窗口(W)', '帮助(H)'].map(m => <button key={m}>{m}</button>)}
          <button aria-label="pin"><Icon name="pin" size={14} /></button>
        </Menus>
        <QuickBar>
          {quick.map(q => (
            <QuickItem key={q} $off={q === 'undo'}><button aria-label={q}><Icon name={q} /></button><Caret /></QuickItem>
          ))}
          <SelectTool>
            <button aria-label="select"><Icon name="cursor" /></button>
            <button aria-label="select menu"><Caret /></button>
          </SelectTool>
          <button aria-label="rebuild"><Icon name="traffic" /></button>
          <QuickItem><button aria-label="options"><Icon name="options" /></button><Caret /></QuickItem>
        </QuickBar>
        <DocTitle>PSV4多路阀装配体</DocTitle>
        <Search>
          <Icon name="lens" size={18} />
          <Caret />
          <input aria-label="search" placeholder="SolidWorks 搜索" />
        </Search>
        <TopControls>
          <button aria-label="help"><b>?</b></button>
          <Caret />
          <button aria-label="minimize"><MinIcon /></button>
          <button aria-label="restore"><RestoreIcon /></button>
          <button aria-label="close"><CloseIcon /></button>
        </TopControls>
      </MenuBar>

      <Ribbon>
        {groups.map((g, i) => (
          <RibbonGroup key={i}>
            {g.map(c => (
              <RibbonButton key={c.label} $w={c.w} $menu={c.menu} $off={c.off}>
                <Icon name={c.icon} />
                <RibbonLabel>{c.label}</RibbonLabel>
                {c.menu && <Caret />}
              </RibbonButton>
            ))}
          </RibbonGroup>
        ))}
        <RibbonButton $on $w={58}>
          <Icon name="instant" />
          <RibbonLabel $wide>Instant3D</RibbonLabel>
        </RibbonButton>
        <Watermark>
          <svg width="73" height="72" viewBox="1283 22 73 72" fill="#d3d9e9">
            <path d="M1306 26c17-3 31 0 28 10-2 8-14 13-26 18 10-7 19-13 20-19 1-5-8-7-22-6z" />
            <path d="M1290 59c17-3 31 0 31 8 0 10-16 23-38 27l16-28 3 1-10 19c14-5 22-12 22-18 0-5-9-7-24-6z" />
            <path d="M1354 48c-16-2-31 1-31 9 0 8 15 13 15 21 0 4-8 5-23 5l-1 3c20 1 35-1 35-11 0-8-16-13-16-20 0-4 7-5 21-4z" />
          </svg>
        </Watermark>
      </Ribbon>

      <Main>
        <Left>
          <Tabs>
            <Tab $w={52} $active>装配体</Tab>
            <Tab $w={57}>布局</Tab>
            <Tab $w={56}>草图</Tab>
            <Tab $w={56}>评估</Tab>
            <Tab $w={74}>办公室产品</Tab>
          </Tabs>
          <Panel>
            <PanelTabs>
              <PanelTab $active aria-label="tree"><Icon name="asm" /></PanelTab>
              <PanelTab aria-label="properties"><Icon name="props" /></PanelTab>
              <PanelTab aria-label="configurations"><Icon name="config" /></PanelTab>
              <Expand aria-label="expand">
                <svg width="9" height="8" viewBox="0 0 9 8"><path d="M1 0l3 4-3 4M5 0l3 4-3 4" fill="none" stroke="#44465a" /></svg>
              </Expand>
            </PanelTabs>
            <Filter>
              <button aria-label="filter">
                <svg width="12" height="12" viewBox="0 0 12 12"><path d="M1 1h10L7.500 5.500V11l-3-2V5.500z" fill="#7cc4f6" stroke="#1a50b8" strokeWidth="1.5" /></svg>
              </button>
              <svg width="7" height="4" viewBox="0 0 7 4"><path d="M0 0h7L3.500 4z" fill="currentColor" /></svg>
            </Filter>
            <TreeArea>
              <Tree>
                {nodes.map(([label, icon]) => (
                  <TreeRow key={label}>
                    <Plus aria-label="expand node">
                      <svg width="9" height="9" viewBox="0 0 9 9"><rect x=".5" y=".5" width="8" height="8" rx="1" fill="#fff" stroke="#8c8e98" /><path d="M2 4.500h5M4.500 2v5" stroke="#2f4f9e" /></svg>
                    </Plus>
                    <Dots />
                    <Icon name={icon} />
                    <NodeName>{label}</NodeName>
                  </TreeRow>
                ))}
                <RollbackBar />
              </Tree>
              <VScroll>
                <Arrow d="M0 5L3.500 1 7 5z" />
                <VThumb><Grip vertical /></VThumb>
                <Arrow d="M0 2h7L3.500 6z" />
              </VScroll>
            </TreeArea>
            <HScroll>
              <Arrow d="M5 0v7L1 3.500z" />
              <HThumb><Grip /></HThumb>
              <Arrow d="M2 0v7l4-3.500z" />
            </HScroll>
          </Panel>
          <Splitter aria-label="collapse panel">
            <svg width="5" height="22" viewBox="0 0 5 22"><path d="M4 0v6L1 3zM4 8v6l-3-3zM4 16v6l-3-3z" fill="#55588a" /></svg>
          </Splitter>
        </Left>
        <Viewport>
          <ViewHead>
            <ViewTools>
              {viewTools.map(([name, menu]) => (
                <button key={name} aria-label={name}><Icon name={name} />{menu && <Caret />}</button>
              ))}
            </ViewTools>
            <WindowControls>
              <button aria-label="minimize document"><MinIcon /></button>
              <button aria-label="restore document"><RestoreIcon /></button>
              <button aria-label="close document"><CloseIcon /></button>
            </WindowControls>
          </ViewHead>
          <Stage><Assembly /></Stage>
          <ViewFoot>
            <Triad />
            <span>*后视</span>
          </ViewFoot>
          <TaskTabs>
            {['home', 'library', 'folder', 'viewp', 'search', 'ball', 'palette'].map((n, i) => (
              <TaskTab key={n} $active={i === 0} aria-label={n}><Icon name={n} /></TaskTab>
            ))}
          </TaskTabs>
          <EdgeHandle />
        </Viewport>
      </Main>

      <BottomBar>
        <BottomNav aria-label="first" /><BottomNav aria-label="previous" /><BottomNav aria-label="next" /><BottomNav aria-label="last" />
        <BottomTab $w={45} $active>模型</BottomTab>
        <BottomTab $w={77}>运动算例 1</BottomTab>
      </BottomBar>
    </AppShell>
  );
}
